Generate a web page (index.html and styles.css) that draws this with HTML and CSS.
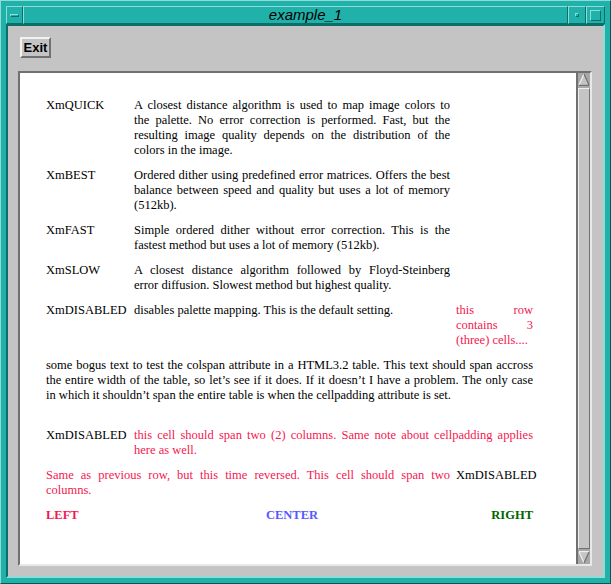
FILE: index.html
```html
<!DOCTYPE html>
<html>
<head>
<meta charset="utf-8">
<link rel="stylesheet" href="styles.css">
</head>
<body>
<div class="window">
  <div class="titlebar">
    <div class="tb-btn menu"><span class="menu-bar"></span></div>
    <div class="tb-title">example_1</div>
    <div class="tb-btn min"><span class="min-dot"></span></div>
    <div class="tb-btn max"><span class="max-box"></span></div>
  </div>
  <div class="client">
    <button class="exit">Exit</button>
    <div class="scrolled">
      <div class="view">
        <div class="doc">
          <div class="c1">XmQUICK</div>
          <div class="c2">
            <span class="l">A closest distance algorithm is used to map image colors to</span>
            <span class="l">the palette. No error correction is performed. Fast, but the</span>
            <span class="l">resulting image quality depends on the distribution of the</span>
            <span class="l last">colors in the image.</span>
          </div>
          <div class="c3"></div>

          <div class="c1">XmBEST</div>
          <div class="c2">
            <span class="l">Ordered dither using predefined error matrices. Offers the best</span>
            <span class="l">balance between speed and quality but uses a lot of memory</span>
            <span class="l last">(512kb).</span>
          </div>
          <div class="c3"></div>

          <div class="c1">XmFAST</div>
          <div class="c2">
            <span class="l">Simple ordered dither without error correction. This is the</span>
            <span class="l last">fastest method but uses a lot of memory (512kb).</span>
          </div>
          <div class="c3"></div>

          <div class="c1">XmSLOW</div>
          <div class="c2">
            <span class="l">A closest distance algorithm followed by Floyd-Steinberg</span>
            <span class="l last">error diffusion. Slowest method but highest quality.</span>
          </div>
          <div class="c3"></div>

          <div class="c1">XmDISABLED</div>
          <div class="c2">disables palette mapping. This is the default setting.</div>
          <div class="c3 red">
            <span class="l">this row</span>
            <span class="l">contains 3</span>
            <span class="l last">(three) cells....</span>
          </div>

          <div class="span3">
            <span class="l">some bogus text to test the colspan attribute in a HTML3.2 table. This text should span accross</span>
            <span class="l">the entire width of the table, so let’s see if it does. If it doesn’t I have a problem. The only case</span>
            <span class="l last">in which it shouldn’t span the entire table is when the cellpadding attribute is set.</span>
          </div>

          <div class="spacer"></div>

          <div class="c1">XmDISABLED</div>
          <div class="span23 red">
            <span class="l">this cell should span two (2) columns. Same note about cellpadding applies</span>
            <span class="l last">here as well.</span>
          </div>

          <div class="span12 red">
            <span class="l">Same as previous row, but this time reversed. This cell should span two</span>
            <span class="l last">columns.</span>
          </div>
          <div class="c3">XmDISABLED</div>

          <div class="c1 b left">LEFT</div>
          <div class="c2 b center">CENTER</div>
          <div class="c3 b right">RIGHT</div>
        </div>
      </div>
      <div class="vscroll">
        <div class="arrow">
          <svg width="12" height="14" viewBox="0 0 12 14">
            <polygon points="6,1 11,12 1,12" fill="#c4c4c4"/>
            <line x1="1" y1="12" x2="6" y2="1" stroke="#f0f0f0" stroke-width="1.2"/>
            <line x1="6" y1="1" x2="11" y2="12" stroke="#707070" stroke-width="1.2"/>
            <line x1="1" y1="12.4" x2="11" y2="12.4" stroke="#707070" stroke-width="1.2"/>
          </svg>
        </div>
        <div class="trough"><div class="thumb"></div></div>
        <div class="arrow">
          <svg width="12" height="14" viewBox="0 0 12 14">
            <polygon points="1,2 11,2 6,13" fill="#c4c4c4"/>
            <line x1="1" y1="1.6" x2="11" y2="1.6" stroke="#f0f0f0" stroke-width="1.2"/>
            <line x1="1" y1="2" x2="6" y2="13" stroke="#f0f0f0" stroke-width="1.2"/>
            <line x1="11" y1="2" x2="6" y2="13" stroke="#707070" stroke-width="1.2"/>
          </svg>
        </div>
      </div>
    </div>
  </div>
</div>
</body>
</html>
```
FILE: styles.css
```css
html, body {
  margin: 0;
  padding: 0;
  background: #20b2aa;
}

.window {
  width: 611px;
  height: 584px;
  box-sizing: border-box;
  background: #20b2aa;
  border: 1px solid;
  border-color: #8fdcd6 #0a5651 #0a5651 #8fdcd6;
  padding: 5px;
  display: flex;
  flex-direction: column;
}

.titlebar {
  height: 18px;
  display: flex;
  flex: none;
}

.tb-btn, .tb-title {
  box-sizing: border-box;
  border: 1px solid;
  border-color: #8fdcd6 #0d6e68 #0d6e68 #8fdcd6;
  background: #20b2aa;
  display: flex;
  align-items: center;
  justify-content: center;
}

.menu { width: 17px; }
.min { width: 18px; }
.max { width: 19px; }

.tb-title {
  flex: 1;
  font-family: "Liberation Sans", Arial, sans-serif;
  font-style: italic;
  font-size: 15px;
  color: #000;
  padding-left: 20px;
  line-height: 16px;
}

.menu-bar {
  width: 9px;
  height: 3px;
  box-sizing: border-box;
  border: 1px solid;
  border-color: #8fdcd6 #0d6e68 #0d6e68 #8fdcd6;
}

.min-dot {
  width: 4px;
  height: 4px;
  box-sizing: border-box;
  border: 1px solid;
  border-color: #8fdcd6 #0d6e68 #0d6e68 #8fdcd6;
}

.max-box {
  width: 11px;
  height: 11px;
  box-sizing: border-box;
  border: 1px solid;
  border-color: #8fdcd6 #0d6e68 #0d6e68 #8fdcd6;
}

.client {
  flex: 1;
  background: #c4c4c4;
  border: 2px solid;
  border-color: #0d6e68 #8fdcd6 #8fdcd6 #0d6e68;
  padding: 11px 11px 10px 10px;
  display: flex;
  flex-direction: column;
  min-height: 0;
}

.exit {
  align-self: flex-start;
  margin: 0 0 0 2px;
  width: 31px;
  height: 21px;
  box-sizing: border-box;
  padding: 0;
  background: #c4c4c4;
  border: 2px solid;
  border-color: #f2f2f2 #707070 #707070 #f2f2f2;
  font-family: "Liberation Sans", Arial, sans-serif;
  font-weight: bold;
  font-size: 13px;
  color: #000;
  line-height: 15px;
}

.scrolled {
  flex: 1;
  margin-top: 13px;
  display: flex;
  border: 2px solid;
  border-color: #707070 #e8e8e8 #e8e8e8 #707070;
  min-height: 0;
}

.view {
  flex: 1;
  background: #fff;
  overflow: hidden;
}

.vscroll {
  width: 14px;
  box-sizing: border-box;
  border-left: 2px solid #707070;
  background: #a8a8a8;
  display: flex;
  flex-direction: column;
}

.arrow {
  height: 14px;
  flex: none;
  display: flex;
}

.trough {
  flex: 1;
  padding: 1px 0;
  display: flex;
}

.thumb {
  flex: 1;
  background: #c4c4c4;
  border: 1px solid;
  border-color: #f0f0f0 #707070 #707070 #f0f0f0;
}

.doc {
  padding: 25px 0 0 26px;
  display: grid;
  grid-template-columns: 82px 316px 77px;
  column-gap: 6px;
  row-gap: 10px;
  font-family: "Liberation Serif", "Times New Roman", serif;
  font-size: 12.5px;
  line-height: 15px;
  color: #000;
}

.c1 { grid-column: 1; }
.c2 { grid-column: 2; }
.c3 { grid-column: 3; }
.span3 { grid-column: 1 / 4; }
.span23 { grid-column: 2 / 4; }
.span12 { grid-column: 1 / 3; }
.spacer { grid-column: 1 / 4; height: 5px; }

.l {
  display: block;
  text-align: justify;
  text-align-last: justify;
}
.l.last { text-align-last: left; }

.red { color: #f5174f; }

.b { font-weight: bold; }
.left { color: #f5174f; text-align: left; }
.center { color: #5858ff; text-align: center; }
.right { color: #006400; text-align: right; }
```
